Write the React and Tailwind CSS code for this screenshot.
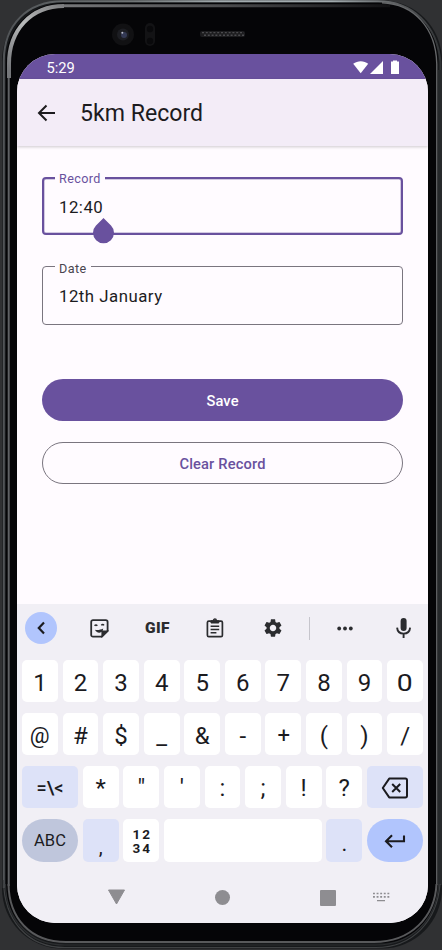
import React from "react";

const KEY = "flex items-center justify-center rounded-[5px] bg-white text-[#1b1b1f]";
const SMALL = "w-[35.8px] shrink-0";

function Bezel() {
  return (
    <svg className="absolute inset-0" width="442" height="950" viewBox="0 0 442 950" fill="none" aria-hidden="true">
      <defs>
        <linearGradient id="shine" x1="0" y1="0" x2="442" y2="0" gradientUnits="userSpaceOnUse">
          <stop offset="0" stopColor="#505356" />
          <stop offset="0.3" stopColor="#6f7475" />
          <stop offset="0.5" stopColor="#a2abae" />
          <stop offset="0.75" stopColor="#a2abae" />
          <stop offset="0.9" stopColor="#5a5c5e" />
          <stop offset="1" stopColor="#303335" />
        </linearGradient>
        <linearGradient id="topInner" x1="60" y1="0" x2="390" y2="0" gradientUnits="userSpaceOnUse">
          <stop offset="0" stopColor="#77787a" />
          <stop offset="0.5" stopColor="#4b4c4e" />
          <stop offset="1" stopColor="#101012" />
        </linearGradient>
        <linearGradient id="corner" x1="10" y1="70" x2="70" y2="8" gradientUnits="userSpaceOnUse">
          <stop offset="0" stopColor="#75777a" />
          <stop offset="0.5" stopColor="#b9bbbb" />
          <stop offset="1" stopColor="#77787a" />
        </linearGradient>
      </defs>
      <rect x="2" y="0.5" width="440" height="948" rx="60" fill="#17191b" />
      <path d="M3.8 888V61C3.8 25 27 1.3 63 1.3H378C412 1.3 437 25 440.5 62V885" stroke="url(#shine)" strokeWidth="2" />
      <rect x="6" y="3" width="432" height="940" rx="57" fill="#050507" />
      <path d="M62 5.7H390" stroke="url(#topInner)" strokeWidth="3" />
      <path d="M8.7 886V66" stroke="#5f6164" strokeWidth="2" />
      <path d="M9 78V64C9 30 31 6 64 6" stroke="url(#corner)" strokeWidth="4" />
      <path d="M382 2.8C414 4 436 28 436.8 64V885" stroke="#66686a" strokeWidth="1.4" />
      <path d="M440 70V884" stroke="#26292b" strokeWidth="4" />
      <path d="M3.5 880C4 920 27 947.5 65 947.5H376C413 947.5 437 921 440 884" stroke="#3f4143" strokeWidth="1.2" />
      <path d="M8.5 884C9 918 30 942 66 942H374C411 942 435 917 436.5 884" stroke="#58595b" strokeWidth="2" />
      <path d="M5.5 884C6 920 29 945 65 945H376C412 945 437 919 438.5 884" stroke="#2c2e30" strokeWidth="1.2" />
      <circle cx="123" cy="34.5" r="11" fill="#111113" />
      <circle cx="123" cy="34.5" r="6" fill="#1d1e23" />
      <circle cx="124" cy="35" r="3" fill="#343a55" />
      <circle cx="122.3" cy="32.7" r="1" fill="#b9bdca" />
      <rect x="145" y="23" width="10" height="23" rx="5" fill="#131315" />
      <circle cx="150" cy="29" r="3.2" fill="#09090b" />
      <circle cx="150" cy="41" r="3.2" fill="#09090b" />
      <rect x="200" y="31" width="45" height="6" rx="2" fill="#1c1c1e" />
      <path d="M202 32.6H244M204 35.2H244" stroke="#4b4b4e" strokeWidth="1.4" strokeDasharray="2 1.8" />
    </svg>
  );
}

function StatusBar() {
  return (
    <div className="flex h-[25px] shrink-0 items-center bg-[#69519e] pl-[29.5px] pt-[2px] text-white">
      <span className="pt-px text-[14.7px] leading-none">5:29</span>
      <svg className="ml-auto mr-[28px]" width="48" height="15" viewBox="0 0 48 15" fill="currentColor">
        <path d="M1.2 3.8C5.6 0.4 12 0.4 16.2 3.8L8.7 13.3Z" />
        <path d="M31 1V14H18Z" />
        <path d="M39 1.6h2V.4h4v1.2h2V14h-8z" />
      </svg>
    </div>
  );
}

function Field({ label, value, active }) {
  return (
    <div
      className={
        active
          ? "relative flex h-[58px] items-center rounded-[4px] border-2 border-[#69519e] pl-[15px] pt-[2px] shadow-[inset_0_0_0_0.5px_#a597c5]"
          : "relative flex h-[59px] items-center rounded-[4px] border border-[#7a757f] pl-[16px] pt-[1px]"
      }
    >
      <span
        className={
          active
            ? "absolute -top-[7px] left-[11px] bg-[#fffbff] px-1 text-[12.6px] leading-[14px] tracking-[0.38px] text-[#69519e]"
            : "absolute -top-[5px] left-[12px] bg-[#fffbff] px-1 text-[12.6px] leading-[14px] tracking-[0.42px] text-[#49454e]"
        }
      >
        {label}
      </span>
      <span className="text-[16.8px] leading-[24px] tracking-[0.5px] text-[#1c1b1e]">{value}</span>
      {active && (
        <svg className="absolute left-[49px] top-[39px]" width="22" height="26" viewBox="0 0 22 26">
          <path d="M10.5 0L18 7.4A10.5 10.5 0 1 1 3 7.4Z" fill="#69519e" />
        </svg>
      )}
    </div>
  );
}

function Toolbar() {
  return (
    <div className="flex h-[48px] shrink-0 items-center pl-[8px] text-[#2b2c2f]">
      <div className="flex size-8 shrink-0 items-center justify-center rounded-full bg-[#b1c5fd] text-[#1b1b1f]">
        <svg width="14" height="14" viewBox="0 0 14 14" fill="none" stroke="currentColor" strokeWidth="2.2">
          <path d="M10 1.6L4.8 7L10 12.4" />
        </svg>
      </div>
      <svg className="ml-[33px] shrink-0" width="19" height="19" viewBox="0 0 19 19" fill="none" stroke="currentColor" strokeWidth="1.8">
        <path d="M11.8 17.7H3A1.8 1.8 0 0 1 1.2 15.9V3A1.8 1.8 0 0 1 3 1.2H15.8A1.8 1.8 0 0 1 17.6 3V11.8Z" />
        <path d="M12.3 17V12.3H17.2Z" fill="currentColor" />
        <path d="M4.7 6.8C5.3 5.6 6.6 5.6 7.2 6.8M11.4 6.4C12.1 5.2 13.3 5.2 13.9 6.4" strokeWidth="1.5" />
        <path d="M5 10.8C7.3 11.4 10.5 11 13.2 9.6C12.9 12.6 11.3 13.6 9.5 13.7C7.3 13.8 5.8 12.5 5 10.8Z" fill="currentColor" stroke="none" />
      </svg>
      <span className="ml-[36px] w-[25px] shrink-0 origin-left scale-x-[1.07] pt-[2px] text-[14.5px] font-black leading-none tracking-[0.4px]">
        GIF
      </span>
      <svg className="ml-[36px] shrink-0" width="18" height="20" viewBox="0 0 18 20" fill="none" stroke="currentColor" strokeWidth="1.7">
        <rect x="1.4" y="3.2" width="15" height="15.4" rx="1.4" />
        <path d="M5 2.8H12.8V5H5Z" fill="currentColor" strokeWidth="1" />
        <circle cx="8.9" cy="2.5" r="1.5" strokeWidth="1.3" />
        <path d="M4.6 8.3H13.2M4.6 11.5H13.2M4.6 14.8H10.4" strokeWidth="1.6" />
      </svg>
      <svg className="ml-[40px] shrink-0" width="18" height="18" viewBox="2 2 20 20" fill="currentColor">
        <path d="M19.14 12.94c.04-.3.06-.61.06-.94 0-.32-.02-.64-.07-.94l2.03-1.58c.18-.14.23-.41.12-.61l-1.92-3.32c-.12-.22-.37-.29-.59-.22l-2.39.96c-.5-.38-1.03-.7-1.62-.94l-.36-2.54c-.04-.24-.24-.41-.48-.41h-3.84c-.24 0-.43.17-.47.41l-.36 2.54c-.59.24-1.13.57-1.62.94l-2.39-.96c-.22-.08-.47 0-.59.22L2.74 8.87c-.12.21-.08.47.12.61l2.03 1.58c-.05.3-.09.63-.09.94s.02.64.07.94l-2.03 1.58c-.18.14-.23.41-.12.61l1.92 3.32c.12.22.37.29.59.22l2.39-.96c.5.38 1.03.7 1.62.94l.36 2.54c.05.24.24.41.48.41h3.84c.24 0 .44-.17.47-.41l.36-2.54c.59-.24 1.13-.56 1.62-.94l2.39.96c.22.08.47 0 .59-.22l1.92-3.32c.12-.22.07-.47-.12-.61l-2.01-1.58zM12 15.6c-1.98 0-3.6-1.62-3.6-3.6s1.62-3.6 3.6-3.6 3.6 1.62 3.6 3.6-1.62 3.6-3.6 3.6z" />
      </svg>
      <div className="ml-[27px] h-[23px] w-px shrink-0 bg-[#c6c5cc]" />
      <svg className="ml-[27px] shrink-0" width="17" height="5" viewBox="0 0 17 5" fill="currentColor">
        <circle cx="2.2" cy="2.5" r="1.9" />
        <circle cx="8" cy="2.5" r="1.9" />
        <circle cx="13.8" cy="2.5" r="1.9" />
      </svg>
      <svg className="ml-[42px] shrink-0" width="16" height="20" viewBox="0 0 16 20" fill="currentColor">
        <rect x="4.6" y="0" width="6" height="13" rx="3" />
        <path d="M1.1 9.6C1.4 13.2 4 15.6 7.6 15.6S13.8 13.2 14.1 9.6M7.6 15.5V20" fill="none" stroke="currentColor" strokeWidth="1.9" />
      </svg>
    </div>
  );
}

function KeyRow({ keys }) {
  return (
    <div className="flex h-[42px] justify-between">
      {keys.map((k) => (
        <div key={k} className={`${KEY} ${SMALL} pt-[3px] text-[24px]`}>
          <span className={k === "0" ? "scale-x-[1.18]" : k === "+" || k === "@" ? "scale-[0.92]" : undefined}>{k}</span>
        </div>
      ))}
    </div>
  );
}

function Keyboard() {
  return (
    <div className="flex h-[319px] shrink-0 flex-col bg-[#f1eff5]">
      <Toolbar />
      <div className="flex flex-col gap-[11px] pl-[5px] pr-[5px] pt-[8px]">
        <KeyRow keys={["1", "2", "3", "4", "5", "6", "7", "8", "9", "0"]} />
        <KeyRow keys={["@", "#", "$", "_", "&", "-", "+", "(", ")", "/"]} />
        <div className="flex h-[42px] justify-between">
          <div className="flex w-[56px] items-center justify-center rounded-[5px] bg-[#dde2f8] text-[18px] font-medium text-[#1b1b1f]">
            =\&lt;
          </div>
          {["*", '"', "'", ":", ";", "!", "?"].map((k) => (
            <div key={k} className={`${KEY} ${SMALL} pt-[2px] text-[24px]`}>
              {k}
            </div>
          ))}
          <div className="flex w-[56px] items-center justify-center rounded-[5px] bg-[#dde2f8] pt-px text-[#1b1b1f]">
            <svg width="28" height="22" viewBox="0 0 28 22" fill="none" stroke="currentColor" strokeWidth="2" strokeLinejoin="round">
              <path d="M8.2 1.6H24.4A1.6 1.6 0 0 1 26 3.2V18.8A1.6 1.6 0 0 1 24.4 20.4H8.2L1.8 11Z" />
              <path d="M11.2 7L19.2 15M19.2 7L11.2 15" />
            </svg>
          </div>
        </div>
        <div className="flex h-[43px] justify-between text-[#1b1b1f]">
          <div className="flex w-[56px] items-center justify-center rounded-full bg-[#bfc6dc] pt-[2px] text-[16.5px]">ABC</div>
          <div className={`flex ${SMALL} items-center justify-center rounded-[5px] bg-[#dde2f8] pt-[13px] text-[20px]`}>,</div>
          <div className={`${KEY} ${SMALL}`}>
            <div className="grid grid-cols-2 gap-x-[2px] text-center text-[13.5px] font-bold leading-[14px]">
              <span>1</span>
              <span>2</span>
              <span>3</span>
              <span>4</span>
            </div>
          </div>
          <div className="w-[158px] rounded-[5px] bg-white" />
          <div className={`flex ${SMALL} items-center justify-center rounded-[5px] bg-[#dde2f8] pt-[6px] text-[22px]`}>.</div>
          <div className="flex w-[56px] items-center justify-center rounded-full bg-[#b1c5fd]">
            <svg width="22" height="14" viewBox="0 0 22 14" fill="none" stroke="currentColor" strokeWidth="2.1">
              <path d="M20 1.5V7.2H2M8 1.2L2 7.2L8 13.2" />
            </svg>
          </div>
        </div>
      </div>
      <div className="mt-[24px] flex h-[22px] items-center pl-[90px] text-[#8e8d91]">
        <svg width="19" height="17" viewBox="0 0 19 17" fill="currentColor">
          <path d="M1.5 1H17.5L9.5 15Z" stroke="currentColor" strokeLinejoin="round" />
        </svg>
        <div className="ml-[89px] mt-px size-[15px] rounded-full bg-current" />
        <div className="ml-[90px] mt-px size-4 rounded-[1px] bg-current" />
        <svg className="ml-[36px] mt-px" width="18" height="11" viewBox="0 0 18 11" fill="none" stroke="currentColor">
          <path d="M1 1.5H18M1 4.8H18" strokeWidth="1.7" strokeDasharray="1.9 1.7" />
          <path d="M5 8.7H13" strokeWidth="1.2" />
        </svg>
      </div>
    </div>
  );
}

export default function App() {
  return (
    <div className="relative h-[950px] w-[442px] overflow-hidden bg-[#303133] pl-[17px] pt-[54px] font-['Roboto',sans-serif]">
      <Bezel />
      <main className="relative flex h-[869px] w-[411px] flex-col overflow-hidden rounded-[38px] bg-[#fffbff]">
        <StatusBar />
        <header className="flex h-[67px] shrink-0 items-center bg-[#f3ecf7] pl-[20px] pt-[2px] text-[#1c1b1e] shadow-[0_1px_3px_rgba(0,0,0,0.2)]">
          <svg className="-mt-[2px]" width="19" height="18" viewBox="0 0 19 18" fill="none" stroke="currentColor" strokeWidth="2">
            <path d="M18 9H2.5M9.5 1.5L2 9L9.5 16.5" />
          </svg>
          <h1 className="ml-[24px] text-[23.1px] leading-none">5km Record</h1>
        </header>
        <section className="flex grow flex-col px-[25px] pt-[31px]">
          <Field label="Record" value="12:40" active />
          <div className="h-[31px]" />
          <Field label="Date" value="12th January" />
          <button className="mt-[54px] h-[42px] rounded-full bg-[#69519e] pt-[2px] text-[14.7px] font-medium tracking-[0.12px] text-white">
            Save
          </button>
          <button className="mt-[21px] h-[42px] rounded-full border border-[#7a757f] pt-[2px] text-[14.7px] font-medium tracking-[0.15px] text-[#69519e]">
            Clear Record
          </button>
        </section>
        <Keyboard />
      </main>
    </div>
  );
}
